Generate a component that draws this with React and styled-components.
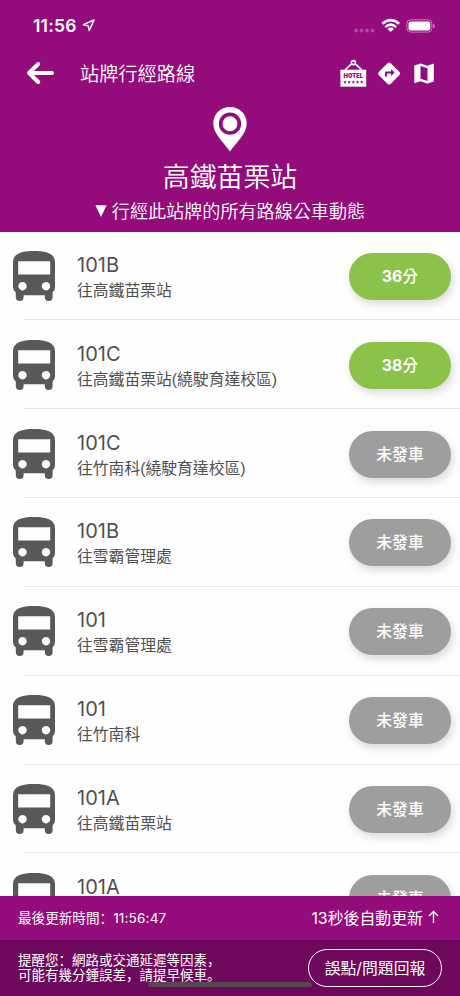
import React from 'react';
import styled, { createGlobalStyle } from 'styled-components';

const Global = createGlobalStyle`
  * { box-sizing: border-box; }
  body { margin: 0; background: #fefefe; }
  svg { display: block; flex: none; }
`;

const Screen = styled.div`
  width: 460px;
  height: 996px;
  overflow: hidden;
  display: flex;
  flex-direction: column;
  background: #fefefe;
  font-family: Inter, "Noto Sans CJK TC", sans-serif;
  white-space: nowrap;
`;

const Header = styled.header`
  flex: none;
  height: 231.5px;
  background: #940b7c;
  color: #fff;
`;

const StatusBar = styled.div`
  height: 50px;
  padding: 1px 24px 0 33px;
  display: flex;
  align-items: center;
`;

const Clock = styled.span`
  width: 49px;
  font-size: 17.5px;
  font-weight: 600;
  letter-spacing: 0.2px;
`;

const StatusIcons = styled.div`
  margin-left: auto;
  display: flex;
  align-items: center;
`;

const NavBar = styled.nav`
  height: 46px;
  padding: 0 25px 0 26px;
  display: flex;
  align-items: center;
`;

const NavTitle = styled.h1`
  margin: 2px auto 0 26px;
  font-size: 19.2px;
  font-weight: 350;
  line-height: 28px;
`;

const NavIcons = styled.div`
  display: flex;
  align-items: center;
  gap: 11px;
`;

const Hero = styled.div`
  padding-top: 11px;
  display: flex;
  flex-direction: column;
  align-items: center;
`;

const StopName = styled.h2`
  margin: 7px 0 0;
  font-size: 26.9px;
  font-weight: 350;
  line-height: 36px;
`;

const Subtitle = styled.div`
  margin-top: 3px;
  display: flex;
  align-items: center;
  gap: 5px;
  font-size: 18.1px;
  font-weight: 350;
  line-height: 26px;
`;

const RouteList = styled.main`
  flex: 1;
  min-height: 0;
  overflow: hidden;
`;

const Row = styled.div`
  height: 88.85px;
  padding: 0 9px 0 13px;
  display: flex;
  align-items: center;
  background: linear-gradient(#e8e8e8, #e8e8e8) right bottom / calc(100% - 23px) 1px no-repeat;
`;

const RouteInfo = styled.div`
  margin: 4px auto 0 22px;
  color: #505050;
`;

const RouteNumber = styled.div`
  font-size: 20px;
  font-weight: 400;
  line-height: 25px;
`;

const Destination = styled.div`
  font-family: "Liberation Sans", "Noto Sans CJK TC", sans-serif;
  font-size: 15.8px;
  line-height: 25px;
`;

const Pill = styled.button`
  width: 102px;
  height: 47px;
  margin-top: 1px;
  padding: 1px 0 0;
  border: 0;
  border-radius: 24px;
  background: ${(p) => (p.$active ? '#8bc34a' : '#9e9e9e')};
  box-shadow: 2px 4px 8px rgba(0, 0, 0, 0.15);
  color: #fff;
  font: ${(p) => (p.$active ? 700 : 500)} 15.8px/24px Inter, "Noto Sans CJK TC", sans-serif;
`;

const Minute = styled.span`
  font-weight: 500;
`;

const UpdateBar = styled.div`
  flex: none;
  height: 44px;
  padding: 0 21px 0 18px;
  display: flex;
  align-items: center;
  justify-content: space-between;
  background: #940b7c;
  color: #fff;
`;

const UpdatedAt = styled.span`
  font: 400 13.6px/20px Inter, "Noto Sans CJK SC", sans-serif;
`;

const UpdatedTime = styled.span`
  letter-spacing: 0.15px;
`;

const Countdown = styled.span`
  display: flex;
  align-items: center;
  gap: 5px;
  font-size: 15.9px;
  margin-top: -2px;
`;

const NoticeBar = styled.footer`
  position: relative;
  flex: none;
  height: 56px;
  padding: 0 18px;
  display: flex;
  align-items: center;
  justify-content: space-between;
  background: #6e085c;
  color: #fff;
`;

const Notice = styled.p`
  margin: 0 0 2px;
  font: 400 13.5px/15.5px "Noto Sans CJK SC", sans-serif;
`;

const ReportButton = styled.button`
  position: relative;
  width: 134px;
  height: 38px;
  padding: 1px 0 0;
  border: 1.3px solid #fff;
  border-radius: 19px;
  background: #6e085c;
  color: #fff;
  font: 400 15.8px/24px Inter, "Noto Sans CJK TC", sans-serif;
`;

const HomeIndicator = styled.div`
  position: absolute;
  left: 148px;
  bottom: 9px;
  width: 164px;
  height: 5px;
  border-radius: 3px;
  background: #56474f;
`;

const LocationArrow = () => (
  <svg width="13" height="13" viewBox="0 0 13 13" fill="none" stroke="#fff" strokeWidth="1.4" strokeLinejoin="round">
    <path d="M12 1 L1.4 5.7 L6.2 6.8 L7.2 11.6 Z" />
  </svg>
);

const SignalDots = () => (
  <svg width="21" height="18" viewBox="0 0 21 18" fill="#b14a9e">
    {[2, 7.5, 13, 18.5].map((x) => <circle key={x} cx={x} cy="13.4" r="2" />)}
  </svg>
);

const Wifi = () => (
  <svg width="31" height="18" viewBox="0.5 0 31 18" fill="none" stroke="#fff" strokeWidth="2.5">
    <path d="M7.8 6.8 Q16.2 -0.6 24.6 6.8" />
    <path d="M10.8 10.1 Q16.2 5.2 21.6 10.1" />
    <path d="M16.2 15 L13 11.9 Q16.2 9.2 19.4 11.9 Z" fill="#fff" stroke="none" />
  </svg>
);

const Battery = () => (
  <svg width="30" height="14" viewBox="0 0 30 14">
    <rect x="0.9" y="0.8" width="25" height="12.3" rx="3.8" fill="none" stroke="#c879bb" strokeWidth="1" />
    <rect x="2.5" y="2.4" width="21.8" height="9.1" rx="2.2" fill="#fff" />
    <path d="M27.2 4.8 Q29 5.3 29 7 Q29 8.7 27.2 9.2 Z" fill="#c879bb" />
  </svg>
);

const BackArrow = () => (
  <svg width="28" height="24" viewBox="0 0 28 24" fill="none" stroke="#fff" strokeWidth="4" strokeLinecap="round" strokeLinejoin="round">
    <path d="M12.2 3 L3 12 L12.2 21 M4 12 H26" />
  </svg>
);

const HotelSign = () => (
  <svg width="27" height="28" viewBox="0 0 27 28">
    <path d="M4.8 11.2 L11.6 4.8 M22 11.2 L15.2 4.8" stroke="#fff" strokeWidth="1.6" />
    <circle cx="13.4" cy="3.6" r="2" fill="none" stroke="#fff" strokeWidth="1.6" />
    <rect x="0.4" y="10.7" width="25.8" height="17" fill="#fff" />
    <text x="13.3" y="19.3" textAnchor="middle" textLength="19.5" lengthAdjust="spacingAndGlyphs" fill="#940b7c" fontFamily="Inter, sans-serif" fontSize="6.6" fontWeight="900">HOTEL</text>
    {[5, 9.2, 13.3, 17.5, 21.7].map((x) => (
      <path key={x} transform={`translate(${x} 23)`} fill="#940b7c" d="M0-1.8 L.5-.6 1.8-.5 .8.3 1.1 1.6 0 .9-1.1 1.6-.8.3-1.8-.5-.5-.6Z" />
    ))}
  </svg>
);

const Directions = () => (
  <svg width="24" height="24" viewBox="0.9 -0.5 24 24" fill="#fff">
    <path d="M22.43 10.59l-9.01-9.01c-.75-.75-2.07-.76-2.83 0l-9 9c-.78.78-.78 2.04 0 2.82l9 9c.39.39.9.58 1.41.58.51 0 1.02-.19 1.41-.58l8.99-8.99c.79-.76.8-2.02.03-2.82zM14 14.5V12h-4v3H8v-4c0-.55.45-1 1-1h5V7.5l3.5 3.5-3.5 3.5z" />
  </svg>
);

const MapIcon = () => (
  <svg width="22" height="22" viewBox="0 -0.5 22 22" fill="#fff">
    <path d="M20.8 1 L14.5 3.2 L7.5 1 L1.3 3 V20.8 L7.5 18.7 L14.5 21 L20.8 18.9 Z M14.5 18.4 L7.5 16.2 V3.6 L14.5 5.8 Z" fillRule="evenodd" />
  </svg>
);

const Pin = () => (
  <svg width="34" height="45" viewBox="0 0 34 45">
    <path fill="#fff" d="M17 0 C7.3 0 .3 7.1 .3 16.4 C.3 27.5 11.8 36.2 17 44.5 C22.2 36.2 33.7 27.5 33.7 16.4 C33.7 7.1 26.7 0 17 0Z" />
    <circle cx="17" cy="16.7" r="9.3" fill="#fff" stroke="#940b7c" strokeWidth="3.7" />
  </svg>
);

const Triangle = () => (
  <svg width="12" height="12" viewBox="0 0 12 12" fill="#fff">
    <path d="M.4 .3 H11.6 L6 12Z" />
  </svg>
);

const Bus = () => (
  <svg width="42" height="50" viewBox="0 0 42 50">
    <path fill="#595959" fillRule="evenodd" d="M0 11 C0 2.5 9 0 21 0 C33 0 42 2.5 42 11 V36 Q42 39.5 39.6 41.5 V46.3 Q39.6 50 35.7 50 Q31.8 50 31.8 46.3 V44.2 H10.6 V46.3 Q10.6 50 6.7 50 Q2.8 50 2.8 46.3 V41.5 Q0 39.5 0 36Z M5.2 10.2 V23.5 H37.2 V10.2Z M9.5 31 a4.2 4.2 0 1 0 .01 0Z M33 31 a4.2 4.2 0 1 0 .01 0Z" />
  </svg>
);

const UpArrow = () => (
  <svg width="11" height="14" viewBox="0 0 11 14" fill="none" stroke="#fff" strokeWidth="1.4">
    <path d="M5.5 13 V1.5 M1 6 L5.5 1.5 L10 6" />
  </svg>
);

const routes = [
  { number: '101B', to: '往高鐵苗栗站', minutes: 36 },
  { number: '101C', to: '往高鐵苗栗站(繞駛育達校區)', minutes: 38 },
  { number: '101C', to: '往竹南科(繞駛育達校區)' },
  { number: '101B', to: '往雪霸管理處' },
  { number: '101', to: '往雪霸管理處' },
  { number: '101', to: '往竹南科' },
  { number: '101A', to: '往高鐵苗栗站' },
  { number: '101A', to: '' },
];

function RouteRow({ route }) {
  return (
    <Row>
      <Bus />
      <RouteInfo>
        <RouteNumber>{route.number}</RouteNumber>
        <Destination>{route.to || '\u00a0'}</Destination>
      </RouteInfo>
      <Pill $active={Boolean(route.minutes)}>
        {route.minutes ? <>{route.minutes}<Minute>分</Minute></> : '未發車'}
      </Pill>
    </Row>
  );
}

export default function App() {
  return (
    <Screen>
      <Global />
      <Header>
        <StatusBar>
          <Clock>11:56</Clock>
          <LocationArrow />
          <StatusIcons>
            <SignalDots />
            <Wifi />
            <Battery />
          </StatusIcons>
        </StatusBar>
        <NavBar>
          <BackArrow />
          <NavTitle>站牌行經路線</NavTitle>
          <NavIcons>
            <HotelSign />
            <Directions />
            <MapIcon />
          </NavIcons>
        </NavBar>
        <Hero>
          <Pin />
          <StopName>高鐵苗栗站</StopName>
          <Subtitle><Triangle />行經此站牌的所有路線公車動態</Subtitle>
        </Hero>
      </Header>
      <RouteList>
        {routes.map((route, i) => <RouteRow key={i} route={route} />)}
      </RouteList>
      <UpdateBar>
        <UpdatedAt>最後更新時間：<UpdatedTime>11:56:47</UpdatedTime></UpdatedAt>
        <Countdown>13秒後自動更新<UpArrow /></Countdown>
      </UpdateBar>
      <NoticeBar>
        <Notice>提醒您：網路或交通延遲等因素，<br />可能有幾分鍾誤差，請提早候車。</Notice>
        <HomeIndicator />
        <ReportButton>誤點/問題回報</ReportButton>
      </NoticeBar>
    </Screen>
  );
}
